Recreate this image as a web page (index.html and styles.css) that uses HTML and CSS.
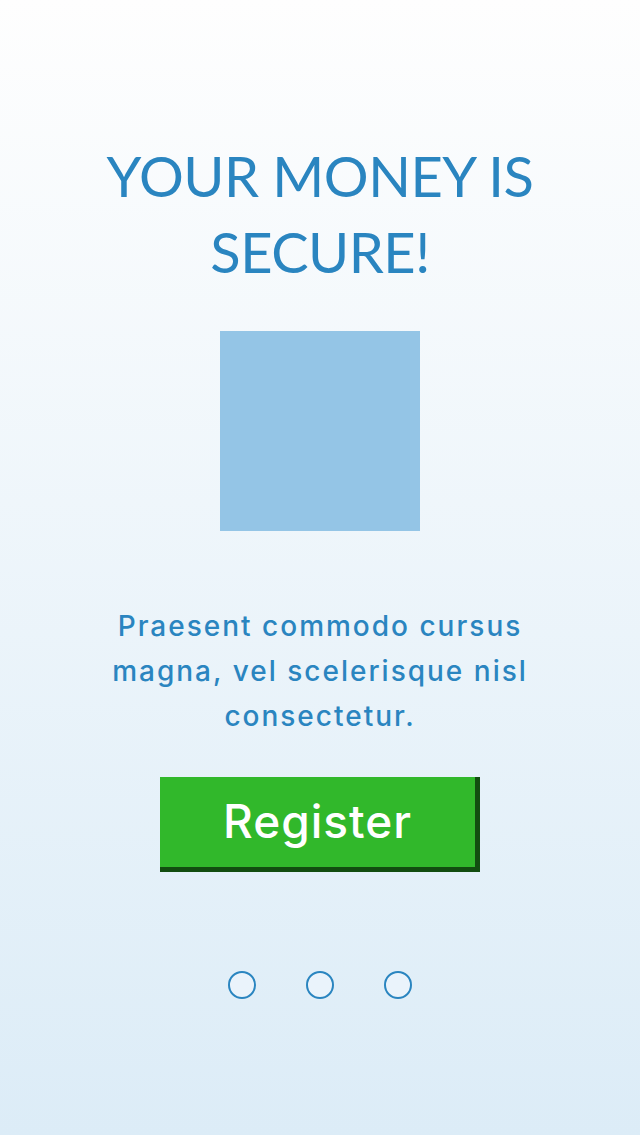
FILE: index.html
```html
<!DOCTYPE html>
<html lang="en">
<head>
<meta charset="utf-8">
<title>Your money is secure</title>
<link rel="stylesheet" href="styles.css">
</head>
<body>
<main class="screen">
  <h1 class="title">YOUR MONEY IS<br>SECURE!</h1>
  <div class="picture"></div>
  <p class="text">Praesent commodo cursus magna, vel scelerisque nisl consectetur.</p>
  <button class="register" type="button">Register</button>
  <nav class="dots">
    <span class="dot"></span>
    <span class="dot"></span>
    <span class="dot"></span>
  </nav>
</main>
</body>
</html>
```
FILE: styles.css
```css
html, body {
  margin: 0;
  padding: 0;
}
body {
  width: 640px;
  height: 1135px;
  background: linear-gradient(to bottom, #fefefe 0%, #dcecf7 100%);
  font-family: Lato, "Liberation Sans", sans-serif;
  color: #2a85c0;
  overflow: hidden;
}
.screen {
  display: flex;
  flex-direction: column;
  align-items: center;
  padding-top: 138px;
}
.title {
  margin: 0;
  font-size: 56px;
  line-height: 76px;
  font-weight: 400;
  text-align: center;
  letter-spacing: -0.5px;
}
.picture {
  width: 200px;
  height: 200px;
  background: #94c5e6;
  margin-top: 41px;
}
.text {
  margin: 73px 0 0;
  width: 440px;
  font-family: Inter, "Open Sans", sans-serif;
  font-weight: 500;
  font-size: 28px;
  line-height: 45px;
  text-align: center;
  letter-spacing: 2px;
}
.register {
  margin-top: 38px;
  width: 320px;
  height: 95px;
  box-sizing: border-box;
  background: #31b82b;
  border: 0;
  border-right: 5px solid #124d10;
  border-bottom: 5px solid #124d10;
  color: #ffffff;
  font-family: Inter, "Open Sans", sans-serif;
  font-weight: 500;
  font-size: 46px;
  letter-spacing: 1px;
  padding: 0 0 2px;
  cursor: pointer;
}
.dots {
  display: flex;
  gap: 50px;
  margin-top: 99px;
}
.dot {
  width: 24px;
  height: 24px;
  border: 2px solid #2a85c0;
  border-radius: 50%;
  background: #eaf3fb;
}
```
